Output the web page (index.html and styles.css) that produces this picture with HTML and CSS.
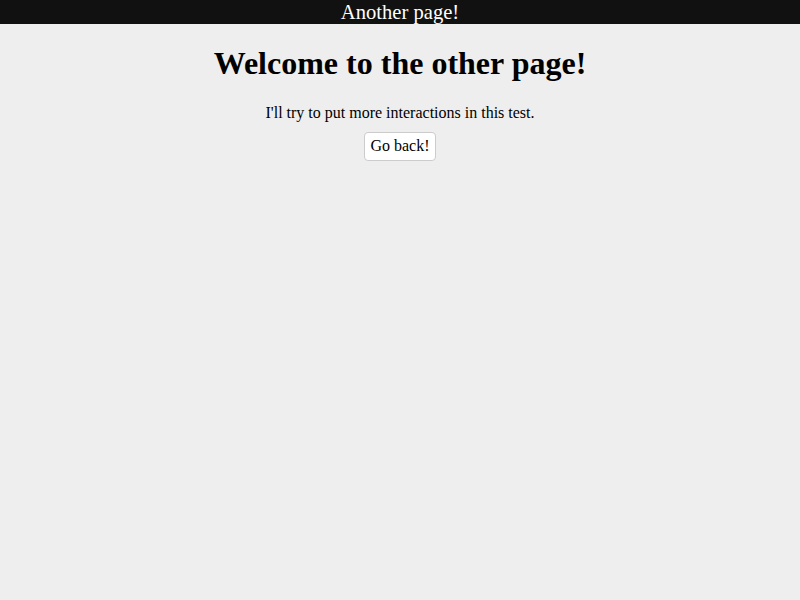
FILE: index.html
```html
<!DOCTYPE html>
<html>
<head>
<meta charset="utf-8">
<link rel="stylesheet" href="styles.css">
</head>
<body>
<header class="topbar"><span class="topbar-title">Another page!</span></header>
<main class="content">
<h1 class="title">Welcome to the other page!</h1>
<p class="lead">I'll try to put more interactions in this test.</p>
<button class="back-btn">Go back!</button>
</main>
</body>
</html>
```
FILE: styles.css
```css
html, body {
  margin: 0;
  padding: 0;
  background: #eeeeee;
  font-family: "Liberation Serif", "Times New Roman", serif;
  color: #000;
}
.topbar {
  height: 24px;
  background: #111111;
  color: #fff;
  text-align: center;
  overflow: hidden;
  font-size: 20.6px;
  line-height: 25px;
}
.content {
  display: flex;
  flex-direction: column;
  align-items: center;
  text-align: center;
}
.title {
  font-size: 32px;
  font-weight: bold;
  margin: 21px 0 22px;
}
.lead {
  font-size: 16px;
  margin: 0 0 10px;
}
.back-btn {
  font-family: "Liberation Serif", "Times New Roman", serif;
  font-size: 16px;
  background: #fff;
  color: #000;
  border: 1px solid #cccccc;
  border-radius: 4px;
  padding: 4px 5px 5px;
  line-height: 18px;
}
```
